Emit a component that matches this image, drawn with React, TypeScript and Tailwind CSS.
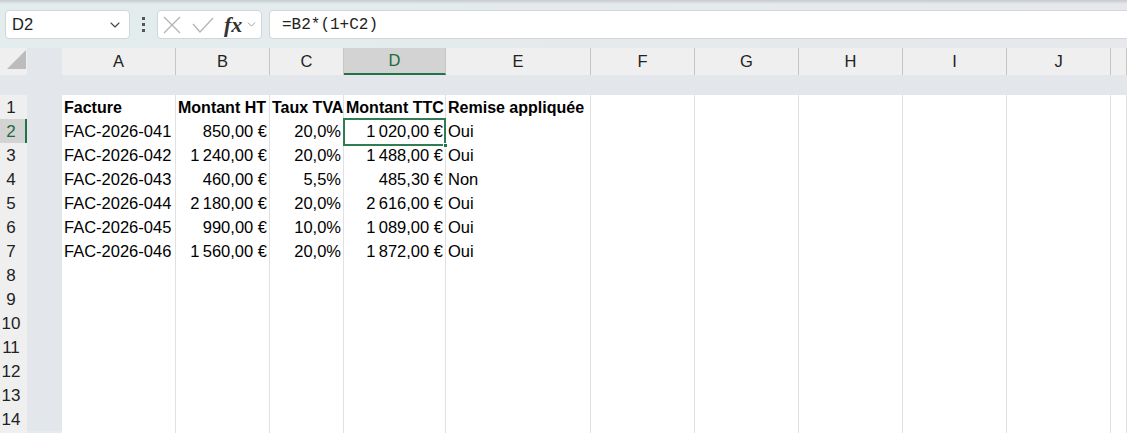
import { ChevronDown } from 'lucide-react';

const cols =
  'grid grid-cols-[27px_35px_114px_94px_74px_102px_145px_104px_104px_104px_104px_104px_1fr]';

const letters = ['A', 'B', 'C', 'D', 'E', 'F', 'G', 'H', 'I', 'J', ''];

const ns = '\u2009';

const data: string[][] = [
  ['Facture', 'Montant HT', 'Taux TVA', 'Montant TTC', 'Remise appliquée'],
  ['FAC-2026-041', '850,00 €', '20,0%', `1${ns}020,00 €`, 'Oui'],
  ['FAC-2026-042', `1${ns}240,00 €`, '20,0%', `1${ns}488,00 €`, 'Oui'],
  ['FAC-2026-043', '460,00 €', '5,5%', '485,30 €', 'Non'],
  ['FAC-2026-044', `2${ns}180,00 €`, '20,0%', `2${ns}616,00 €`, 'Oui'],
  ['FAC-2026-045', '990,00 €', '10,0%', `1${ns}089,00 €`, 'Oui'],
  ['FAC-2026-046', `1${ns}560,00 €`, '20,0%', `1${ns}872,00 €`, 'Oui'],
];

function FormulaBar() {
  return (
    <div className="mt-[6px] flex h-[29px] items-center">
      <div className="ml-[5px] flex h-full w-[125px] items-center justify-between rounded-[4px] border border-[#d3d6d8] bg-white pl-[6px] pr-[6px]">
        <span className="text-[16.5px] text-[#222]">D2</span>
        <ChevronDown className="h-[16px] w-[16px] text-[#444]" strokeWidth={1.6} />
      </div>
      <div className="flex h-full w-[27px] flex-col items-center justify-center gap-[3px]">
        <span className="h-[3px] w-[3px] bg-[#555]" />
        <span className="h-[3px] w-[3px] bg-[#555]" />
        <span className="h-[3px] w-[3px] bg-[#555]" />
      </div>
      <div className="flex h-full w-[105px] items-center rounded-[4px] border border-[#d3d6d8] bg-white pl-[5px]">
        <svg width="18" height="18" viewBox="0 0 18 18" className="text-[#b4b4b4]">
          <path d="M1 1 L17 17 M17 1 L1 17" stroke="currentColor" strokeWidth="1.3" fill="none" />
        </svg>
        <svg width="22" height="18" viewBox="0 0 22 18" className="ml-[11px] text-[#b4b4b4]">
          <path d="M1 8 L8 16 L21 2" stroke="currentColor" strokeWidth="1.3" fill="none" />
        </svg>
        <span className="ml-[10px] font-['Liberation_Serif',serif] text-[22px] font-bold italic leading-none text-[#333]">
          fx
        </span>
        <ChevronDown className="ml-[3px] h-[13px] w-[13px] text-[#8a8a8a]" strokeWidth={1.5} />
      </div>
      <div className="ml-[7px] -mr-[3px] flex h-full flex-1 items-center rounded-[4px] border border-[#d3d6d8] bg-white pl-[12px]">
        <span className="font-['Liberation_Mono',monospace] text-[16px] text-[#222]">=B2*(1+C2)</span>
      </div>
    </div>
  );
}

function HeaderRow() {
  return (
    <div className={`${cols} h-[24px]`}>
      <div className="relative bg-[#efefef]">
        <svg width="20" height="20" viewBox="0 0 20 20" className="absolute left-[7px] top-[2px]">
          <polygon points="19,0 19,19 0,19" fill="#bcbcbc" />
        </svg>
      </div>
      <div />
      {letters.map((l) => {
        const sel = l === 'D';
        return (
          <div
            key={l || 'k'}
            className={
              sel
                ? 'flex items-center justify-center border-r border-b-2 border-r-[#c6c6c6] border-b-[#217346] bg-[#d3d3d3] text-[16.5px] text-[#1d6b3c]'
                : 'flex items-center justify-center border-r border-[#c6c6c6] bg-[#efefef] text-[16.5px] text-[#222]'
            }
          >
            {l}
          </div>
        );
      })}
    </div>
  );
}

function DataRow({ n }: { n: number }) {
  const row = data[n - 1];
  const bold = n === 1;
  const selRow = n === 2;
  const cells = [0, 1, 2, 3, 4, 5, 6, 7, 8, 9, 10];
  return (
    <div className={`${cols} h-[24px]`}>
      <div
        className={
          selRow
            ? 'flex items-center justify-center border-b border-r-2 border-b-[#c9c9c9] border-r-[#217346] bg-[#d3d3d3] pr-[3px] text-[17px] text-[#1d6b3c]'
            : 'flex items-center justify-center border-b border-[#c9c9c9] bg-[#efefef] pr-[5px] text-[17px] text-[#222]'
        }
      >
        {n}
      </div>
      <div />
      {cells.map((c) => {
        const value = row && c < 5 ? row[c] : '';
        const right = !bold && (c === 1 || c === 2 || c === 3);
        const isSel = n === 2 && c === 3;
        return (
          <div
            key={c}
            className={`relative flex items-center overflow-visible whitespace-nowrap border-r border-b border-[#e1e1e1] bg-white text-black ${
              right ? 'justify-end pr-[2px]' : 'pl-[2px]'
            } ${bold ? 'text-[16px] font-bold' : 'text-[16.5px]'} ${isSel ? 'z-10' : ''}`}
          >
            {value}
            {isSel && (
              <div className="pointer-events-none absolute -left-px -top-px -right-px -bottom-px border-2 border-[#2f7d50]">
                <span className="absolute -right-[4px] -bottom-[4px] h-[5px] w-[5px] border border-white bg-[#217346]" />
              </div>
            )}
          </div>
        );
      })}
    </div>
  );
}

export default function App() {
  const rows = Array.from({ length: 14 }, (_, i) => i + 1);
  return (
    <div className="flex h-[433px] w-full flex-col overflow-hidden bg-linear-to-r from-[#e3eded] to-[#e6e8ec] font-['Liberation_Sans',sans-serif]">
      <div className="h-[4px] bg-linear-to-b from-[#c6cacd] to-transparent" />
      <FormulaBar />
      <div className="mt-[9px] flex flex-col bg-[#e3e7eb]">
        <HeaderRow />
        <div className="h-[23px]" />
        {rows.map((n) => (
          <DataRow key={n} n={n} />
        ))}
      </div>
    </div>
  );
}
